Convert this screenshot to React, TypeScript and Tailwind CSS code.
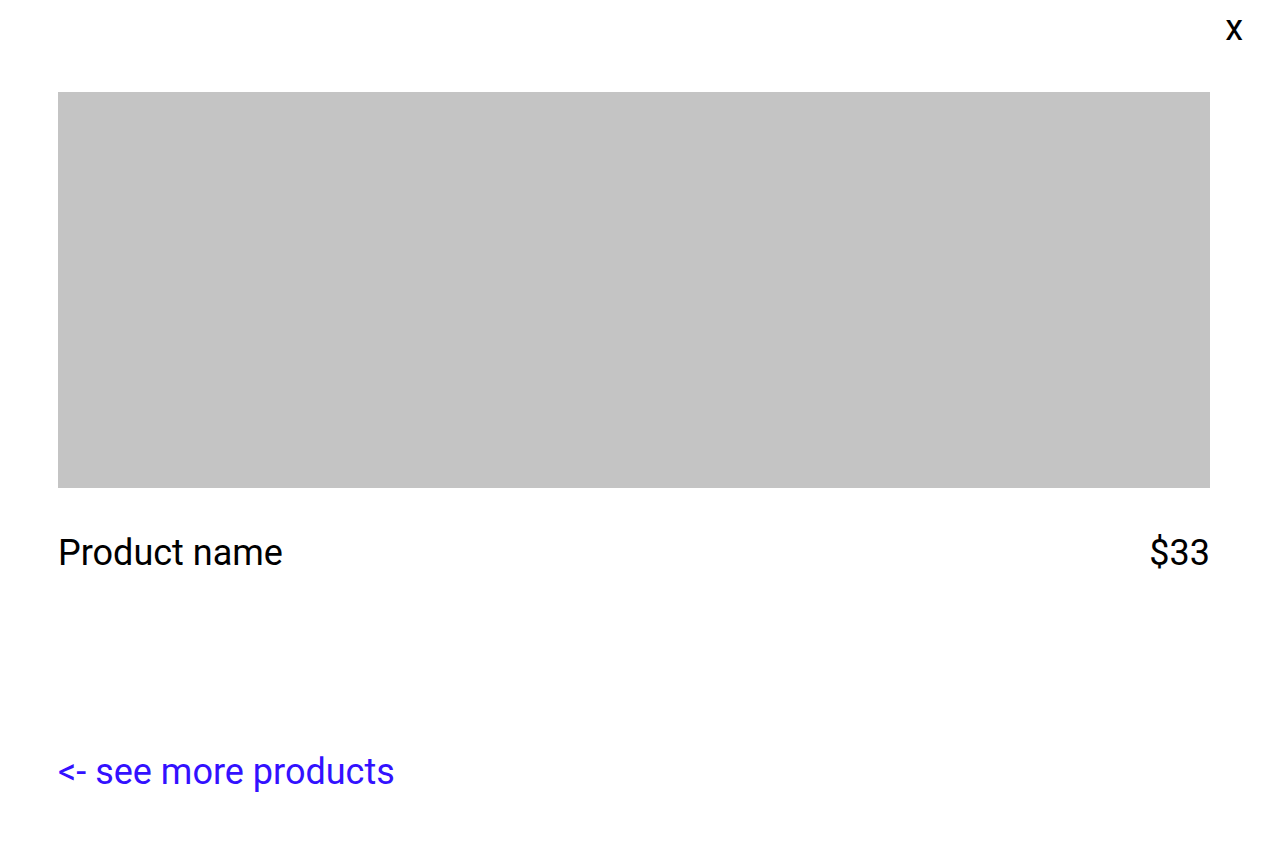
export default function App() {
  return (
    <div className="min-h-screen bg-white text-black" style={{ fontFamily: 'Roboto, "Noto Sans", sans-serif' }}>
      <div className="flex h-[92px] justify-end pr-[25px] pt-[1px]">
        <button className="h-fit text-[36px] leading-normal text-black">x</button>
      </div>
      <div className="px-[58px]">
        <div className="h-[396px] w-full bg-[#c4c4c4]" />
        <div className="mt-[38px] flex items-start justify-between text-[36px] leading-normal">
          <span>Product name</span>
          <span>$33</span>
        </div>
        <a href="#" className="mt-[165px] block w-fit text-[36px] leading-normal text-[#3311ff]">
          &lt;- see more products
        </a>
      </div>
    </div>
  );
}
